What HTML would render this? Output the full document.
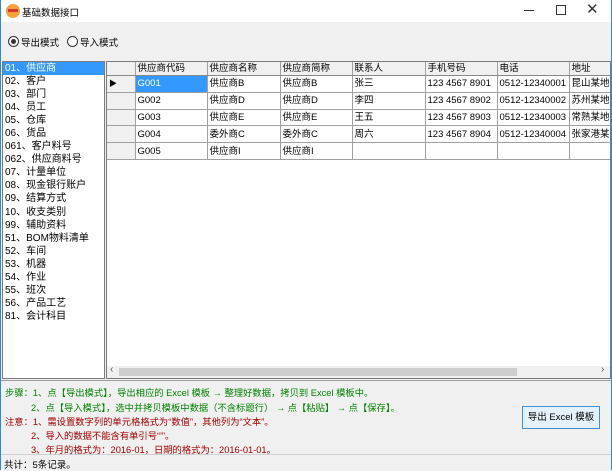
<!DOCTYPE html><html><head><meta charset="utf-8"><style>
*{margin:0;padding:0;box-sizing:border-box}
body{width:612px;height:470px;overflow:hidden;background:#f0f0f0;font-family:"Liberation Sans","Noto Sans CJK SC",sans-serif;font-size:10px;color:#000;position:relative}
.a{position:absolute;white-space:nowrap}
.bl{position:absolute;top:0;bottom:0;width:1px;background:#2b8ae0}
#title{left:0;top:0;width:612px;height:22px;background:#fff}
#list{left:2px;top:61px;width:103px;height:318px;background:#fff;border:1px solid #7a7a7a}
#list div{height:13.05px;line-height:13px;padding-left:2px;font-size:10px}
#grid{left:106px;top:61px;width:505px;height:318px;background:#fff;border:1px solid #7a7a7a;overflow:hidden}
table{border-collapse:collapse;table-layout:fixed;width:540px;font-size:9.5px;position:absolute;left:0;top:0}
td{border-right:1px solid #a0a0a0;border-bottom:1px solid #a0a0a0;height:16.8px;padding-left:2px;white-space:nowrap;overflow:hidden;line-height:15px}
tr.h td{height:13px;background:#f0f0f0;border-bottom:1px solid #888;font-size:9.5px;line-height:13px;vertical-align:middle}
td.rh{background:#f0f0f0}
.g{color:#008000;font-size:9.3px}.r{color:#a00000;font-size:9.3px}
</style></head><body>
<div class="a" id="title"></div>
<div class="bl" style="left:0"></div><div class="bl" style="right:0"></div>
<div class="a" style="left:6px;top:4px;width:14px;height:14px;border-radius:50%;background:#f4a23a"></div>
<div class="a" style="left:8px;top:9px;width:10px;height:3px;background:#d33"></div>
<div class="a" style="left:22px;top:5px;font-size:9.5px">基础数据接口</div>
<div class="a" style="left:524px;top:10px;width:10px;height:1px;background:#333"></div>
<div class="a" style="left:556px;top:5px;width:10px;height:10px;border:1px solid #333"></div>
<div class="a" style="left:586px;top:0;font-size:15px;color:#333">✕</div>
<div class="a" style="left:8px;top:36px;width:11px;height:11px;border-radius:50%;border:1px solid #333;background:#fff"></div>
<div class="a" style="left:11px;top:39px;width:5px;height:5px;border-radius:50%;background:#333"></div>
<div class="a" style="left:21px;top:35px;font-size:9.5px">导出模式</div>
<div class="a" style="left:67px;top:36px;width:11px;height:11px;border-radius:50%;border:1px solid #333;background:#fff"></div>
<div class="a" style="left:80px;top:35px;font-size:9.5px">导入模式</div>
<div class="a" id="list">
<div style="background:#3399ff;color:#fff">01、供应商</div><div>02、客户</div><div>03、部门</div><div>04、员工</div><div>05、仓库</div><div>06、货品</div><div>061、客户料号</div><div>062、供应商料号</div><div>07、计量单位</div><div>08、现金银行账户</div><div>09、结算方式</div><div>10、收支类别</div><div>99、辅助资料</div><div>51、BOM物料清单</div><div>52、车间</div><div>53、机器</div><div>54、作业</div><div>55、班次</div><div>56、产品工艺</div><div>81、会计科目</div>
</div>
<div class="a" id="grid">
<table>
<colgroup><col style="width:28px"><col style="width:72px"><col style="width:73px"><col style="width:72px"><col style="width:73px"><col style="width:72px"><col style="width:72px"><col style="width:78px"></colgroup>
<tr class="h"><td class="rh"></td><td>供应商代码</td><td>供应商名称</td><td>供应商简称</td><td>联系人</td><td>手机号码</td><td>电话</td><td>地址</td></tr>
<tr><td class="rh" style="font-size:8px">▶</td><td style="background:#3399ff;color:#fff">G001</td><td>供应商B</td><td>供应商B</td><td>张三</td><td>123 4567 8901</td><td>0512-12340001</td><td>昆山某地址</td></tr>
<tr><td class="rh"></td><td>G002</td><td>供应商D</td><td>供应商D</td><td>李四</td><td>123 4567 8902</td><td>0512-12340002</td><td>苏州某地址</td></tr>
<tr><td class="rh"></td><td>G003</td><td>供应商E</td><td>供应商E</td><td>王五</td><td>123 4567 8903</td><td>0512-12340003</td><td>常熟某地址</td></tr>
<tr><td class="rh"></td><td>G004</td><td>委外商C</td><td>委外商C</td><td>周六</td><td>123 4567 8904</td><td>0512-12340004</td><td>张家港某地</td></tr>
<tr><td class="rh"></td><td>G005</td><td>供应商I</td><td>供应商I</td><td></td><td></td><td></td><td></td></tr>
</table>
<div class="a" style="left:0;top:304px;width:503px;height:12px;background:#f0f0f0"></div>
<div class="a" style="left:12px;top:306px;width:398px;height:8px;background:#cdcdcd"></div>
<div class="a" style="left:3px;top:302px;font-size:10px;color:#555">‹</div>
<div class="a" style="left:494px;top:302px;font-size:10px;color:#555">›</div>
</div>
<div class="a" style="left:1px;top:380px;width:610px;height:1px;background:#a0a0a0"></div>
<div class="a g" style="left:5px;top:385px">步骤：1、点【导出模式】，导出相应的 Excel 模板 → 整理好数据，拷贝到 Excel 模板中。</div>
<div class="a g" style="left:31px;top:400px">2、点【导入模式】，选中并拷贝模板中数据（不含标题行） → 点【粘贴】 → 点【保存】。</div>
<div class="a r" style="left:5px;top:414px">注意：1、需设置数字列的单元格格式为“数值”，其他列为“文本”。</div>
<div class="a r" style="left:31px;top:428px">2、导入的数据不能含有单引号“'”。</div>
<div class="a r" style="left:31px;top:442px">3、年月的格式为：2016-01，日期的格式为：2016-01-01。</div>
<div class="a" style="left:522px;top:406px;width:78px;height:23px;border:1px solid #3c8fd8;background:#e5f1fb;font-size:9.5px;line-height:21px;text-align:center">导出 Excel 模板</div>
<div class="a" style="left:1px;top:454px;width:610px;height:1px;background:#d0d0d0"></div>
<div class="a" style="left:4px;top:457px;font-size:9.5px">共计：5条记录。</div>
</body></html>
